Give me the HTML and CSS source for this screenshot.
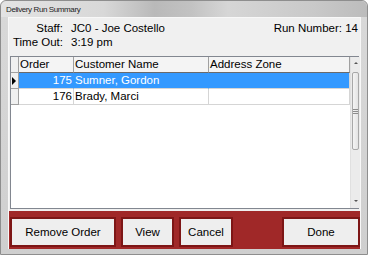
FILE: index.html
```html
<!DOCTYPE html>
<html lang="en">
<head>
    <meta charset="UTF-8">
    <meta name="viewport" content="width=device-width, initial-scale=1.0">
    <title>Delivery Run Summary</title>
    <link rel="stylesheet" href="styles.css">
</head>
<body>
    <div class="window">
        <div class="titlebar">
            <span class="title">Delivery Run Summary</span>
        </div>
        <div class="client">
            <div class="info">
                <div class="info-left">
                    <div class="info-row"><span class="label">Staff:</span><span class="value">JC0 - Joe Costello</span></div>
                    <div class="info-row"><span class="label">Time Out:</span><span class="value">3:19 pm</span></div>
                </div>
                <div class="run">Run Number: 14</div>
            </div>
            <div class="grid">
                <div class="grid-body">
                    <div class="row head">
                        <div class="cell sel"></div>
                        <div class="cell">Order</div>
                        <div class="cell">Customer Name</div>
                        <div class="cell">Address Zone</div>
                    </div>
                    <div class="row active">
                        <div class="cell sel"><span class="arrow"></span></div>
                        <div class="cell num">175</div>
                        <div class="cell">Sumner, Gordon</div>
                        <div class="cell"></div>
                    </div>
                    <div class="row">
                        <div class="cell sel"></div>
                        <div class="cell num">176</div>
                        <div class="cell">Brady, Marci</div>
                        <div class="cell"></div>
                    </div>
                </div>
                <div class="scrollbar">
                    <div class="sb-btn up"></div>
                    <div class="sb-track">
                        <div class="sb-thumb"><span class="grip"></span></div>
                    </div>
                    <div class="sb-btn down"></div>
                </div>
            </div>
            <div class="actions">
                <button class="btn remove">Remove Order</button>
                <button class="btn view">View</button>
                <button class="btn cancel">Cancel</button>
                <button class="btn done">Done</button>
            </div>
        </div>
    </div>
</body>
</html>
```

FILE: styles.css
```css
*{
    margin: 0;
    padding: 0;
    box-sizing: border-box;
}
body{
    width: 368px;
    height: 255px;
    overflow: hidden;
    font-family: "Liberation Sans", Arial, sans-serif;
    font-size: 11.5px;
    color: #000;
}
.window{
    width: 368px;
    height: 255px;
    padding: 0 6px 5px 7px;
    background: linear-gradient(to bottom, #d9d9d9, #cfcfcf);
    border: 1px solid #8e8e8e;
    border-radius: 6px 6px 0 0;
    display: flex;
    flex-direction: column;
}
.titlebar{
    height: 17px;
    margin: 0 -6px 0 -7px;
    padding-left: 5px;
    background: linear-gradient(to right, #e3e3e3 0%, #d8d8d8 28%, #b9b9b9 42%, #c2c2c2 52%, #d6d6d6 62%, #c9c9c9 85%, #bcbcbc 100%);
    border-radius: 6px 6px 0 0;
    display: flex;
    align-items: center;
}
.title{
    font-size: 8px;
    letter-spacing: -0.4px;
    color: #1e1e1e;
}
.client{
    flex: 1;
    background: #f0f0f0;
    border: 1px solid #f8f8f8;
    border-bottom: none;
    display: flex;
    flex-direction: column;
}
.info{
    height: 38px;
    padding: 3px 2px 0 0;
    display: flex;
    justify-content: space-between;
    line-height: 14px;
}
.info-row{
    display: flex;
}
.label{
    width: 54px;
    text-align: right;
}
.value{
    margin-left: 8px;
}
.grid{
    height: 153px;
    margin: 0 1px;
    border: 1px solid #828790;
    background: #fff;
    display: flex;
}
.grid-body{
    flex: 1;
}
.row{
    display: grid;
    grid-template-columns: 8px 55px 135px 141px;
    height: 16px;
    line-height: 15px;
}
.cell{
    border-right: 1px solid #d5d5d5;
    border-bottom: 1px solid #d5d5d5;
    padding: 0 1px;
    white-space: nowrap;
    overflow: hidden;
}
.num{
    text-align: right;
}
.head .cell{
    background: #f4f4f4;
    border-right-color: #a0a0a0;
    border-bottom-color: #6a6a6a;
}
.row .sel{
    background: #f0f0f0;
    border-right-color: #a0a0a0;
    border-bottom-color: #a0a0a0;
    padding: 0;
    position: relative;
}
.active .cell{
    background: #3399ff;
    color: #fff;
    border-right-color: #3399ff;
}
.active .cell:last-child{
    border-right-color: #d5d5d5;
}
.active .sel{
    background: #f0f0f0;
    border-right-color: #a0a0a0;
}
.arrow{
    position: absolute;
    left: 1px;
    top: 4px;
    border-left: 4px solid #000;
    border-top: 4px solid transparent;
    border-bottom: 4px solid transparent;
}
.scrollbar{
    width: 12px;
    background: #ebebeb;
    border-left: 1px solid #e0e0e0;
    display: flex;
    flex-direction: column;
}
.sb-btn{
    height: 14px;
    position: relative;
}
.sb-btn::after{
    content: "";
    position: absolute;
    left: 3px;
    border-left: 2px solid transparent;
    border-right: 2px solid transparent;
}
.up::after{
    top: 5px;
    border-bottom: 2px solid #555;
}
.down::after{
    top: 6px;
    border-top: 2px solid #555;
}
.sb-track{
    flex: 1;
    padding: 1px 0;
}
.sb-thumb{
    height: 78px;
    margin: 0 1px;
    background: linear-gradient(to right, #f4f4f4, #e4e4e4);
    border: 1px solid #a8a8a8;
    border-radius: 2px;
    display: flex;
    align-items: center;
    justify-content: center;
}
.grip{
    width: 5px;
    height: 5px;
    border-top: 1px solid #8c8c8c;
    border-bottom: 1px solid #8c8c8c;
    background: linear-gradient(#8c8c8c, #8c8c8c) center / 100% 1px no-repeat;
}
.actions{
    height: 38px;
    margin-top: 2px;
    padding: 6px 0 2px 1px;
    background: #a02828;
    display: flex;
    gap: 5px;
}
.btn{
    height: 30px;
    background: #eeeeee;
    border: 2px solid #7d1616;
    font-family: "Liberation Sans", Arial, sans-serif;
    font-size: 11.5px;
    color: #000;
}
.remove{
    width: 106px;
}
.view{
    width: 53px;
}
.cancel{
    width: 54px;
}
.done{
    width: 78px;
    margin-left: auto;
}
```
